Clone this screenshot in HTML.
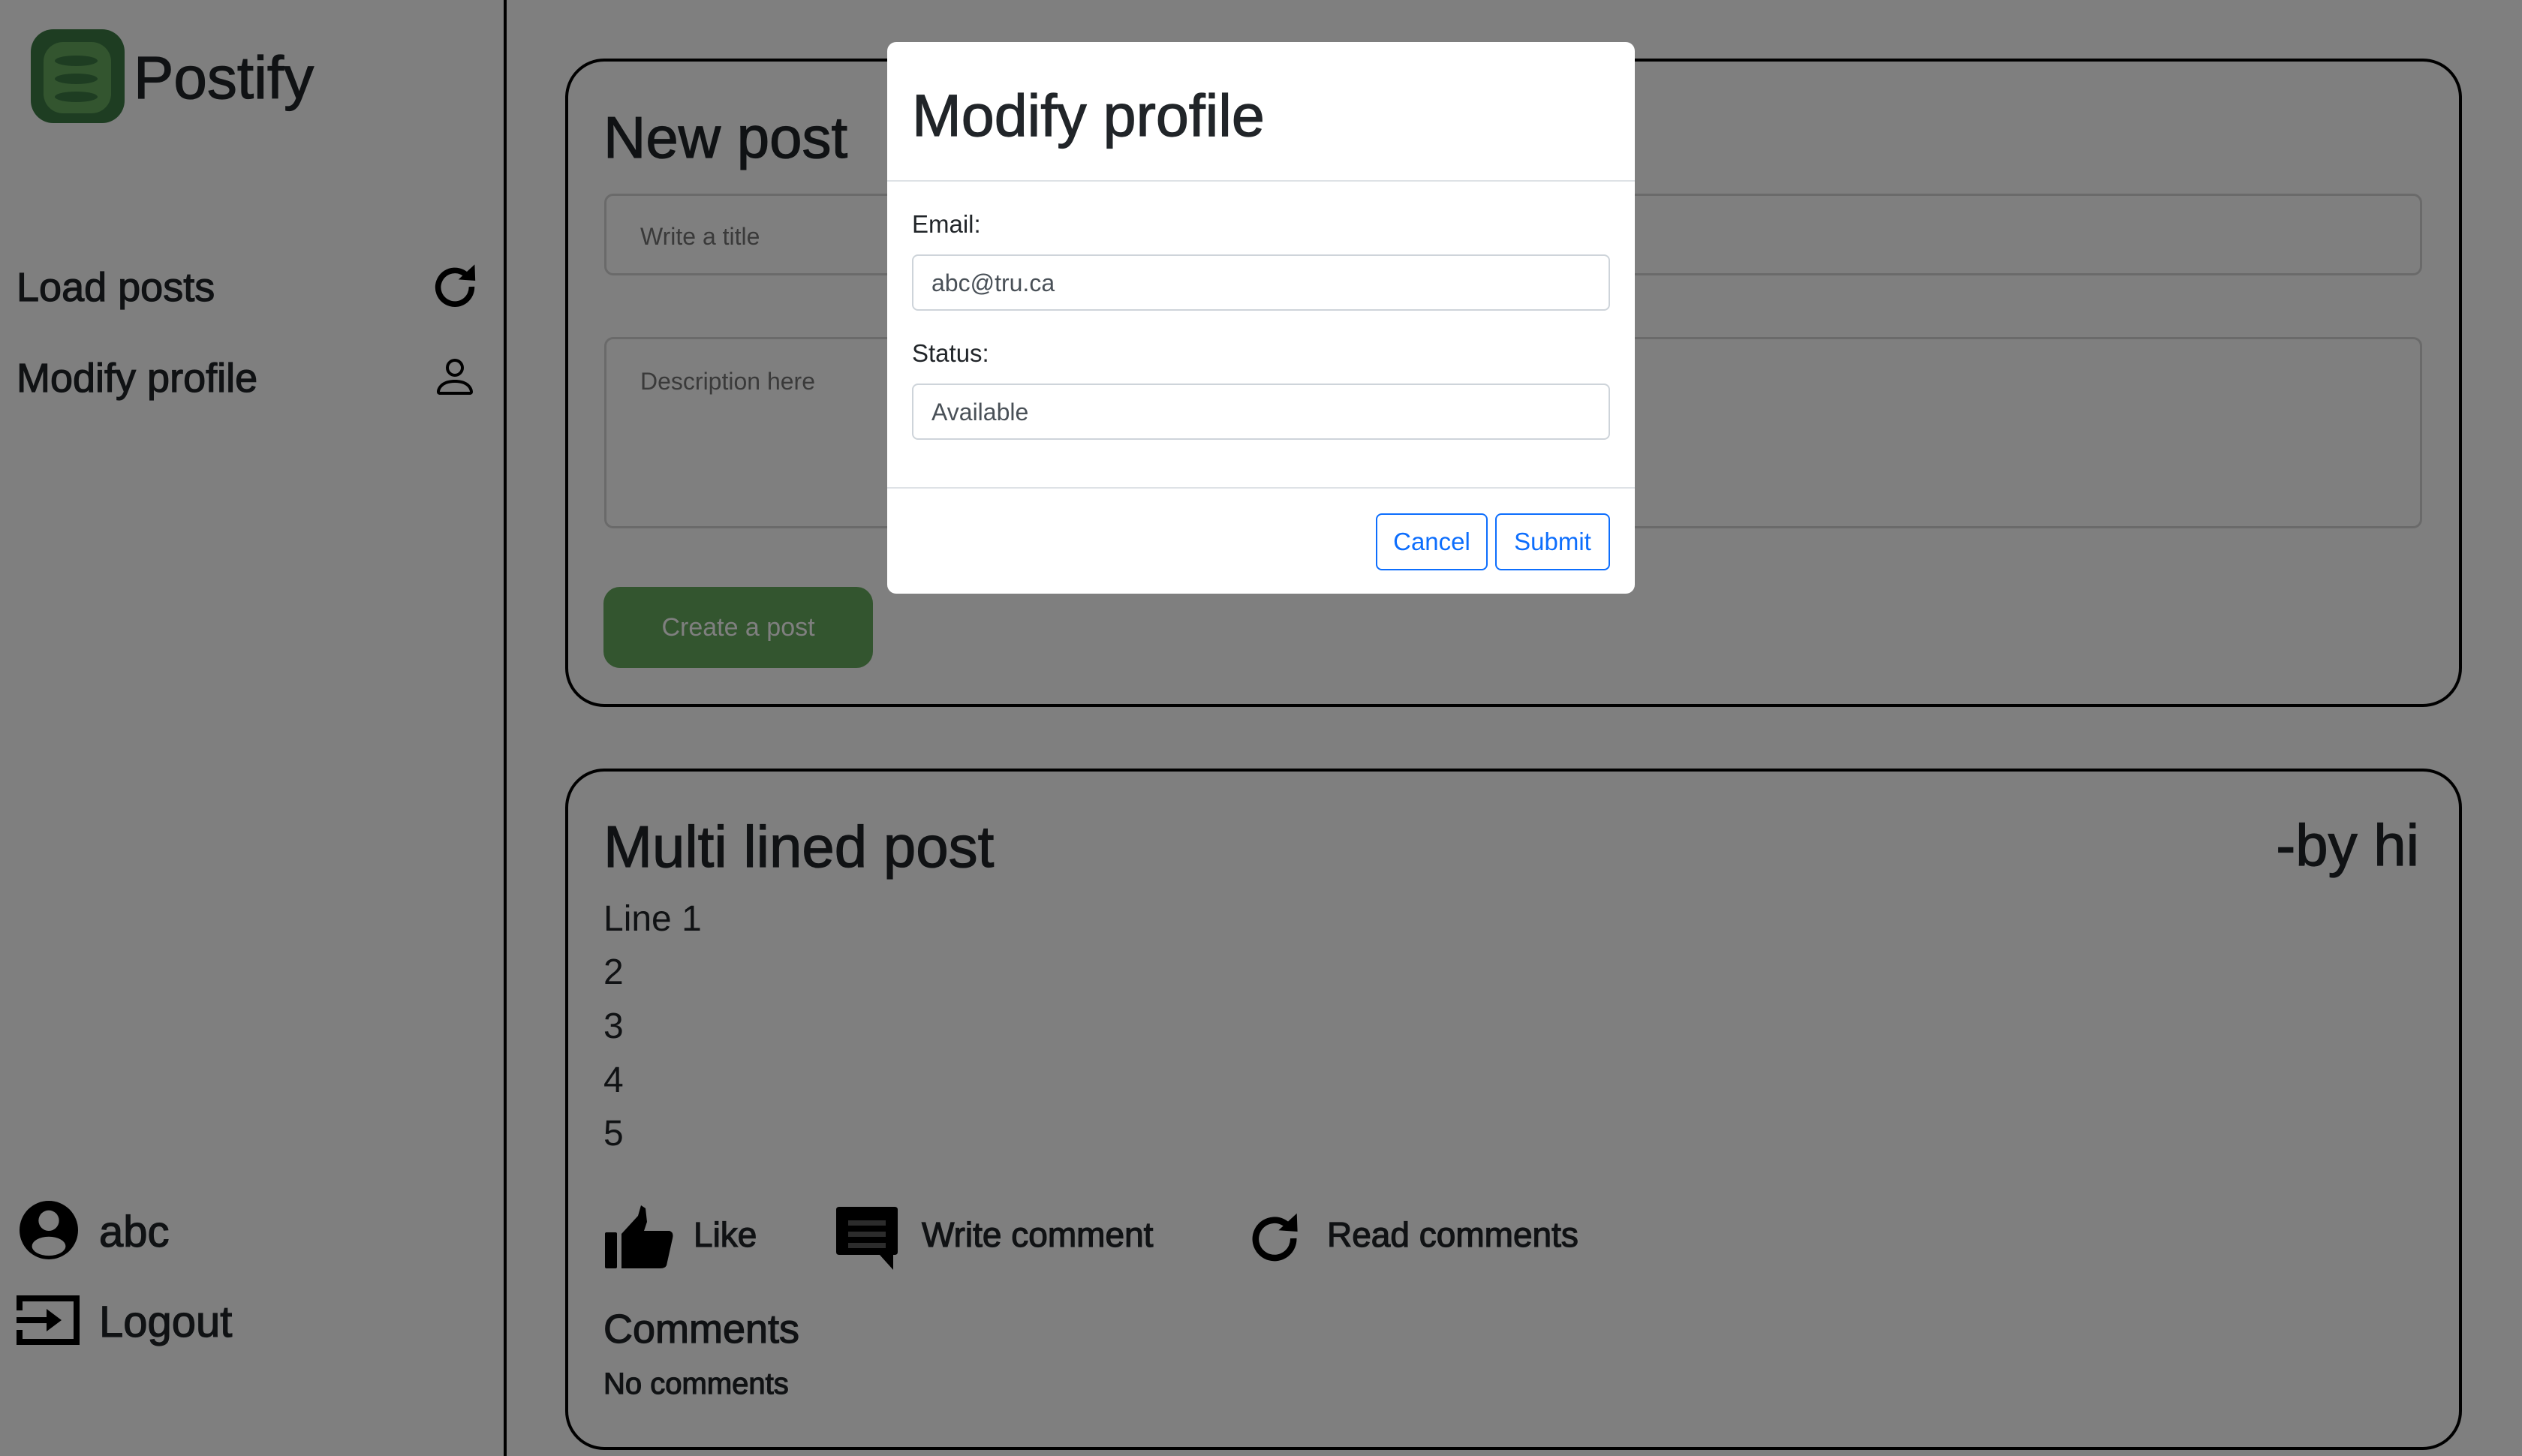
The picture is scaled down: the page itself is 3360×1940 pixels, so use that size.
<!DOCTYPE html>
<html><head><meta charset="utf-8"><style>
*{margin:0;padding:0;box-sizing:border-box}
html,body{width:3360px;height:1940px;overflow:hidden;background:#fff;font-family:"Liberation Sans",Arial,sans-serif;color:#212529}
.a{position:absolute;white-space:nowrap;line-height:1}
.m{-webkit-text-stroke:1.2px #212529}
.card{position:absolute;border:4px solid #000;border-radius:52px}
.inp{position:absolute;border:3px solid #d4d4d4;border-radius:12px}
.ph{color:#757575;font-size:32px}
svg{position:absolute}
#ov{position:absolute;left:0;top:0;width:3360px;height:1940px;background:rgba(0,0,0,.5)}
#modal{position:absolute;left:1182px;top:56px;width:996px;height:735px;background:#fff;border-radius:12px}
.mi{position:absolute;left:33px;width:930px;height:75px;border:2px solid #ced4da;border-radius:8px}
.btn{position:absolute;top:628px;height:76px;border:2px solid #0d6efd;border-radius:8px;color:#0d6efd;font-size:33px;line-height:72px;text-align:center}
</style></head><body>
<div style="position:absolute;left:671px;top:0;width:4px;height:1940px;background:#000"></div>
<div style="position:absolute;left:41px;top:39px;width:125px;height:125px;border-radius:30px;background:#3c7a44"></div>
<div style="position:absolute;left:58px;top:56px;width:90px;height:95px;border-radius:26px;background:#66aa5e"></div>
<div style="position:absolute;left:73px;top:74px;width:57px;height:14px;border-radius:50%;background:#3c7a44"></div>
<div style="position:absolute;left:73px;top:98px;width:57px;height:14px;border-radius:50%;background:#3c7a44"></div>
<div style="position:absolute;left:73px;top:122px;width:57px;height:14px;border-radius:50%;background:#3c7a44"></div>
<div class="a m" style="left:178px;top:64px;font-size:80px">Postify</div>
<div class="a m" style="left:22px;top:356px;font-size:54px">Load posts</div>
<div class="a m" style="left:22px;top:477px;font-size:54px">Modify profile</div>
<svg style="left:574px;top:350px" width="64" height="64" viewBox="0 0 16 16"><path d="M12.3 4.6A5.6 5.6 0 1 0 13.6 8" fill="none" stroke="#000" stroke-width="1.9"/><path d="M9.2 5.6L14.6 0.6 14.8 6z" fill="#000"/></svg>
<svg style="left:574px;top:470px" width="64" height="64" viewBox="0 0 16 16" fill="#000"><path d="M8 8a3 3 0 1 0 0-6 3 3 0 0 0 0 6m2-3a2 2 0 1 1-4 0 2 2 0 0 1 4 0m4 8c0 1-1 1-1 1H3s-1 0-1-1 1-4 6-4 6 3 6 4m-1-.004c-.001-.246-.154-.986-.832-1.664C11.516 10.68 10.289 10 8 10s-3.516.68-4.168 1.332c-.678.678-.83 1.418-.832 1.664z"/></svg>
<svg style="left:26px;top:1600px" width="78" height="78" viewBox="0 0 16 16" fill="#000"><path fill-rule="evenodd" d="M0 8a8 8 0 1 0 16 0A8 8 0 1 0 0 8zM5.2 5.4a2.8 2.8 0 1 0 5.6 0a2.8 2.8 0 1 0 -5.6 0zM3.4 12.4a4.6 2.6 0 1 0 9.2 0a4.6 2.6 0 1 0 -9.2 0z"/></svg>
<svg style="left:22px;top:1724px" width="86" height="70" viewBox="0 0 86 70" fill="none" stroke="#000" stroke-width="8"><path d="M4 22V6h76v58H4V48"/><path d="M0 35h50"/><path d="M40 20l20 15-20 15z" fill="#000" stroke="none"/></svg>
<div class="a m" style="left:132px;top:1613px;font-size:58px">abc</div>
<div class="a m" style="left:132px;top:1733px;font-size:58px">Logout</div>
<div class="card" style="left:753px;top:78px;width:2527px;height:864px"></div>
<div class="a m" style="left:804px;top:144px;font-size:78px">New post</div>
<div class="inp" style="left:805px;top:258px;width:2422px;height:109px"><div class="a ph" style="left:45px;top:38px">Write a title</div></div>
<div class="inp" style="left:805px;top:449px;width:2422px;height:255px"><div class="a ph" style="left:45px;top:40px">Description here</div></div>
<div style="position:absolute;left:804px;top:782px;width:359px;height:108px;border-radius:22px;background:#66aa5e;color:#fff;font-size:34px;line-height:108px;text-align:center">Create a post</div>
<div class="card" style="left:753px;top:1024px;width:2527px;height:908px"></div>
<div class="a m" style="left:804px;top:1089px;font-size:78px">Multi lined post</div>
<div class="a m" style="right:137px;top:1087px;font-size:78px">-by hi</div>
<div class="a" style="left:804px;top:1201px;font-size:48px">Line 1</div>
<div class="a" style="left:804px;top:1272px;font-size:48px">2</div>
<div class="a" style="left:804px;top:1344px;font-size:48px">3</div>
<div class="a" style="left:804px;top:1416px;font-size:48px">4</div>
<div class="a" style="left:804px;top:1487px;font-size:48px">5</div>
<svg style="left:806px;top:1606px" width="92" height="84" viewBox="0 0 92 84" fill="#000"><rect x="0" y="36" width="16" height="48" rx="2"/><path d="M22 38L44 14 48 0 54 4 56 22 52 34H86Q92 36 90 44L82 80Q80 84 74 84H22z"/></svg>
<svg style="left:1114px;top:1608px" width="82" height="84" viewBox="0 0 82 84"><path d="M0 4Q0 0 4 0H78Q82 0 82 4V60Q82 64 78 64H76V84L58 64H4Q0 64 0 60z" fill="#000"/><rect x="16" y="18" width="50" height="7" fill="#fff" opacity=".35"/><rect x="16" y="33" width="50" height="7" fill="#fff" opacity=".35"/><rect x="16" y="48" width="50" height="7" fill="#fff" opacity=".35"/></svg>
<svg style="left:1662px;top:1614px" width="72" height="72" viewBox="0 0 16 16"><path d="M12.3 4.6A5.6 5.6 0 1 0 13.6 8" fill="none" stroke="#000" stroke-width="1.9"/><path d="M9.2 5.6L14.6 0.6 14.8 6z" fill="#000"/></svg>
<div class="a m" style="left:924px;top:1622px;font-size:46px">Like</div>
<div class="a m" style="left:1228px;top:1622px;font-size:46px">Write comment</div>
<div class="a m" style="left:1768px;top:1622px;font-size:46px">Read comments</div>
<div class="a m" style="left:804px;top:1744px;font-size:54px">Comments</div>
<div class="a m" style="left:804px;top:1824px;font-size:40px">No comments</div>
<div id="ov"></div>
<div id="modal">
<div class="a m" style="left:33px;top:58px;font-size:79px">Modify profile</div>
<div style="position:absolute;left:0;top:184px;width:996px;height:2px;background:#dee2e6"></div>
<div class="a" style="left:33px;top:226px;font-size:33px">Email:</div>
<div class="mi" style="top:283px"><div class="a" style="left:24px;top:20px;font-size:32px;color:#495057">abc@tru.ca</div></div>
<div class="a" style="left:33px;top:398px;font-size:33px">Status:</div>
<div class="mi" style="top:455px"><div class="a" style="left:24px;top:20px;font-size:32px;color:#495057">Available</div></div>
<div style="position:absolute;left:0;top:593px;width:996px;height:2px;background:#dee2e6"></div>
<div class="btn" style="left:651px;width:149px">Cancel</div>
<div class="btn" style="left:810px;width:153px">Submit</div>
</div>
</body></html>
